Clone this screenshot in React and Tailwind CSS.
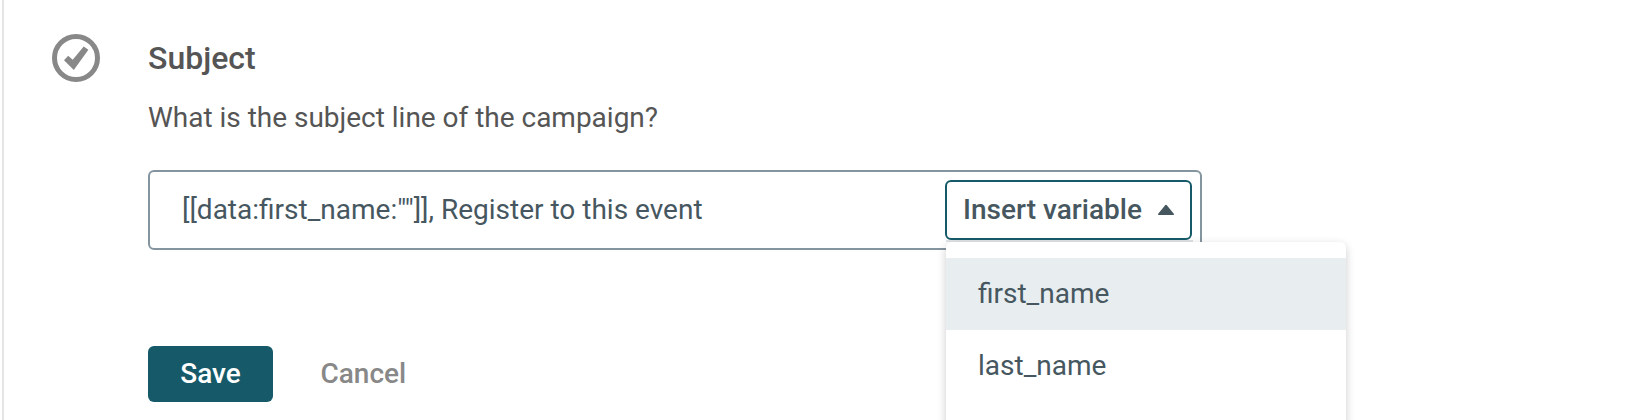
import React, { useState } from "react";

const variables = ["first_name", "last_name"];

function StepIcon() {
  return (
    <svg width="50" height="50" viewBox="0 0 50 50" fill="none">
      <circle cx="25" cy="25" r="21.5" stroke="#888888" strokeWidth="5" />
      <path
        d="M13 27.2L17.2 22.8L21.7 26.8L32.7 13.4L37.4 16.8L22.8 36.9Z"
        fill="#888888"
      />
    </svg>
  );
}

function VariableMenu({ active, onSelect }) {
  return (
    <div className="absolute left-px top-[60px] z-10 w-[400px]">
      <div className="h-0.5 w-[247px] bg-[#dfe3e6]" />
      <div className="h-[220px] rounded-t-md bg-white pt-4 shadow-[0_3px_10px_rgba(0,0,0,0.2)]">
        {variables.map((name) => (
          <div
            key={name}
            onMouseEnter={() => onSelect(name)}
            className={`flex h-[72px] items-center px-8 text-[28px] ${
              active === name ? "bg-[#e8edef]" : "bg-white"
            }`}
          >
            {name}
          </div>
        ))}
      </div>
    </div>
  );
}

function App() {
  const [active, setActive] = useState("first_name");

  return (
    <div className="flex h-[420px] w-full overflow-hidden bg-white pl-0.5 font-['Roboto',sans-serif] text-[#46575f]">
      <div className="flex w-full border-l-2 border-[#e5e5e5] pl-[47px]">
        <div className="w-[97px] shrink-0 pt-[33px]">
          <StepIcon />
        </div>
        <div className="w-[1054px] pt-[38px]">
          <h2 className="text-[32px] font-medium leading-10 text-[#555555]">
            Subject
          </h2>
          <p className="mt-5 text-[28px] leading-10 tracking-[-0.015px] text-[#555555]">
            What is the subject line of the campaign?
          </p>
          {/* Subject input */}
          <div className="mt-8 flex h-20 items-center justify-between rounded-md border-2 border-[#85959f] pl-8 pr-2">
            <span className="text-[28px]">
              [[data:first_name:""]], Register to this event
            </span>
            <div className="relative">
              <button className="flex h-[60px] w-[247px] items-center justify-between rounded-md border-2 border-[#165a69] bg-white pl-4 pr-4 text-[28px] font-medium tracking-[0.03px]">
                Insert variable
                <svg width="17" height="12" viewBox="0 0 17 12">
                  <path
                    d="M1.8 10.2L9 1.6L16.2 10.2Z"
                    fill="#46575f"
                    stroke="#46575f"
                    strokeWidth="1.6"
                    strokeLinejoin="round"
                  />
                </svg>
              </button>
              <VariableMenu active={active} onSelect={setActive} />
            </div>
          </div>
          {/* Actions */}
          <div className="mt-24 flex items-center gap-[47.5px] text-[28px] font-medium">
            <button className="h-14 w-[125px] rounded-md bg-[#165a69] text-white">
              Save
            </button>
            <button className="text-[#888888]">Cancel</button>
          </div>
        </div>
      </div>
    </div>
  );
}

export default App;
